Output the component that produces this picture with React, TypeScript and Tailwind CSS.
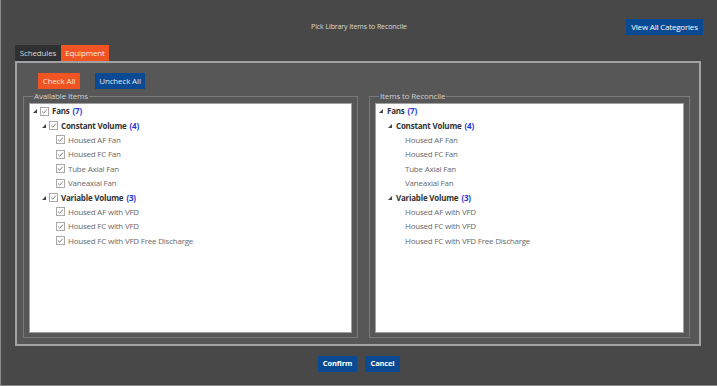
import React from "react";

type Node = { label: string; count?: number; children?: Node[] };

const tree: Node[] = [
  {
    label: "Fans",
    count: 7,
    children: [
      {
        label: "Constant Volume",
        count: 4,
        children: [
          { label: "Housed AF Fan" },
          { label: "Housed FC Fan" },
          { label: "Tube Axial Fan" },
          { label: "Vaneaxial Fan" },
        ],
      },
      {
        label: "Variable Volume",
        count: 3,
        children: [
          { label: "Housed AF with VFD" },
          { label: "Housed FC with VFD" },
          { label: "Housed FC with VFD Free Discharge" },
        ],
      },
    ],
  },
];

const font = { fontFamily: '"Open Sans", "Noto Sans", sans-serif' };

const Arrow = () => (
  <svg width="4" height="4" viewBox="0 0 4 4" className="block">
    <polygon points="4,0 4,4 0,4" fill="#444" />
  </svg>
);

const Check = () => (
  <span className="w-[9px] h-[9px] border border-[#a9a9a9] bg-white flex items-center justify-center shrink-0">
    <svg width="7" height="7" viewBox="0 0 7 7">
      <polyline points="1.2,3.6 2.8,5.2 5.8,1.6" fill="none" stroke="#777" strokeWidth="0.9" />
    </svg>
  </span>
);

const checkPads = ["pl-[3px]", "pl-[12px]", "pl-[19px]"];
const plainPads = ["pl-[3px]", "pl-[12px]", "pl-[21px]"];

function Rows({ nodes, level, checks }: { nodes: Node[]; level: number; checks: boolean }) {
  return (
    <>
      {nodes.map((n) => {
        const parent = !!n.children;
        return (
          <React.Fragment key={n.label}>
            <div className={`h-[14.4px] flex items-center ${checks ? checkPads[level] : plainPads[level]}`}>
              <span className={`${checks ? "w-[7px]" : "w-[8px]"} shrink-0 flex items-center`}>
                {parent && <Arrow />}
              </span>
              {checks && <Check />}
              <span
                className={`${checks ? "ml-[3px]" : ""} whitespace-nowrap text-[8px] tracking-[-0.22px] ${
                  parent ? "font-bold text-[#333]" : "text-[#6a6a6a]"
                }`}
              >
                {n.label}
                {n.count !== undefined && (
                  <span className="ml-[3px] font-bold text-[#2233dd]">({n.count})</span>
                )}
              </span>
            </div>
            {n.children && <Rows nodes={n.children} level={level + 1} checks={checks} />}
          </React.Fragment>
        );
      })}
    </>
  );
}

function GroupBox({ title, checks, className }: { title: string; checks: boolean; className: string }) {
  return (
    <fieldset className={`border border-[#7a7a7a] px-[5px] pb-[4px] flex flex-col ${className}`}>
      <legend className="ml-[4px] px-[1px] text-[8px] tracking-[-0.15px] leading-[12px] text-[#d0d0d0]">
        {title}
      </legend>
      <div className="mt-[1px] flex-1 bg-white border border-[#a0a0a0]">
        <Rows nodes={tree} level={0} checks={checks} />
      </div>
    </fieldset>
  );
}

export default function App() {
  return (
    <div
      style={font}
      className="w-[717px] h-[386px] bg-[#484848] border-l border-b border-[#8c8c8c] flex flex-col"
    >
      <div className="h-[45px] pt-[19px] grid grid-cols-[1fr_auto_1fr] items-start">
        <div />
        <div className="h-[16px] flex items-center text-[7px] tracking-[-0.1px] text-[#dcdcdc]">
          Pick Library Items to Reconcile
        </div>
        <div className="flex justify-end pr-[14px]">
          <button className="h-[16px] w-[77px] bg-[#0a4a92] text-[8px] tracking-[-0.2px] text-white">
            View All Categories
          </button>
        </div>
      </div>

      <div className="ml-[14px] flex h-[16px] text-[8px] tracking-[-0.15px]">
        <div className="w-[46px] bg-[#2e3032] text-[#d6d6d6] flex items-center justify-center">
          Schedules
        </div>
        <div className="w-[48px] bg-[#f05423] text-[#ffe8e0] flex items-center justify-center">
          Equipment
        </div>
      </div>

      <div className="ml-[14px] w-[686px] h-[285px] border-2 border-[#a2a2a2] bg-[#575757] flex flex-col pt-[10px] pb-[6px] pl-[6px] pr-[9px]">
        <div className="flex gap-[15px] pl-[15px] h-[16px] text-[8px] tracking-[-0.15px]">
          <button className="w-[42px] h-[16px] bg-[#f05423] text-[#ffe6dc]">Check All</button>
          <button className="w-[50px] h-[16px] bg-[#0a4a92] text-[#dfe8f5]">Uncheck All</button>
        </div>
        <div className="flex-1 flex gap-[11px] mt-[1px]">
          <GroupBox title="Available Items" checks className="w-[335px]" />
          <GroupBox title="Items to Reconcile" checks={false} className="flex-1" />
        </div>
      </div>

      <div className="flex-1 flex justify-center gap-[8px] pt-[10px]">
        <button className="w-[39px] h-[16px] bg-[#0a4a92] text-[7.5px] tracking-[-0.15px] font-bold text-white">
          Confirm
        </button>
        <button className="w-[35px] h-[16px] bg-[#0a4a92] text-[7.5px] tracking-[-0.15px] font-bold text-white">
          Cancel
        </button>
      </div>
    </div>
  );
}
